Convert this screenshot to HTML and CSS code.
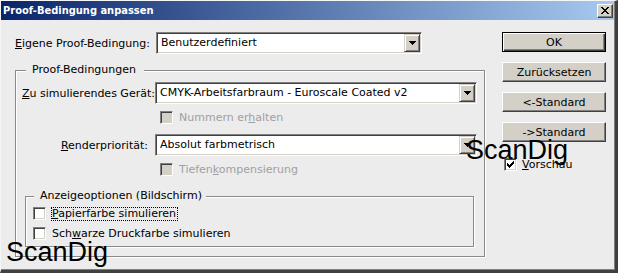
FILE: index.html
```html
<!DOCTYPE html>
<html lang="de">
<head>
<meta charset="utf-8">
<title>Proof-Bedingung anpassen</title>
<link rel="stylesheet" href="styles.css">
</head>
<body>
<div class="window">
  <div class="titlebar">
    <span class="title">Proof-Bedingung anpassen</span>
    <span class="close"><svg width="8" height="7" viewBox="0 0 8 7"><path d="M0 0h2v1H0z M6 0h2v1H6z M1 1h2v1H1z M5 1h2v1H5z M2 2h4v1H2z M3 3h2v1H3z M2 4h4v1H2z M1 5h2v1H1z M5 5h2v1H5z M0 6h2v1H0z M6 6h2v1H6z" fill="#000"/></svg></span>
  </div>
  <div class="content">
    <div class="main">
      <div class="row-top">
        <span class="lbl"><u>E</u>igene Proof-Bedingung:</span>
        <div class="select"><span class="val">Benutzerdefiniert</span><span class="drop"><svg width="7" height="4" viewBox="0 0 7 4"><path d="M0 0h7v1H0z M1 1h5v1H1z M2 2h3v1H2z M3 3h1v1H3z" fill="#000"/></svg></span></div>
      </div>
      <div class="group outer">
        <span class="legend legend-outer">Proof-Bedingungen</span>
        <div class="grid">
          <span class="lbl right"><u>Z</u>u simulierendes Gerät:</span>
          <div class="select"><span class="val">CMYK-Arbeitsfarbraum - Euroscale Coated v2</span><span class="drop"><svg width="7" height="4" viewBox="0 0 7 4"><path d="M0 0h7v1H0z M1 1h5v1H1z M2 2h3v1H2z M3 3h1v1H3z" fill="#000"/></svg></span></div>
          <span></span>
          <div class="check disabled gap-a"><span class="box"></span><span class="ctext">Nummern er<u>h</u>alten</span></div>
          <span class="lbl right gap-b"><u>R</u>enderpriorität:</span>
          <div class="select gap-b"><span class="val">Absolut farbmetrisch</span><span class="drop"><svg width="7" height="4" viewBox="0 0 7 4"><path d="M0 0h7v1H0z M1 1h5v1H1z M2 2h3v1H2z M3 3h1v1H3z" fill="#000"/></svg></span></div>
          <span></span>
          <div class="check disabled gap-a"><span class="box"></span><span class="ctext">Tiefen<u>k</u>ompensierung</span></div>
        </div>
        <div class="group inner">
          <span class="legend legend-inner">Anzeigeoptionen (Bildschirm)</span>
          <div class="check"><span class="box"></span><span class="ctext focus"><u>P</u>apierfarbe simulieren</span></div>
          <div class="check gap-a"><span class="box"></span><span class="ctext nofocus">Sch<u>w</u>arze Druckfarbe simulieren</span></div>
        </div>
      </div>
    </div>
    <div class="side">
      <span class="btn default">OK</span>
      <span class="btn">Zurücksetzen</span>
      <span class="btn">&lt;-Standard</span>
      <span class="btn">-&gt;Standard</span>
      <div class="check preview"><span class="box"><svg width="9" height="9" viewBox="0 0 9 9"><path d="M1 2h1v3H1z M2 3h1v3H2z M3 4h1v3H3z M4 3h1v3H4z M5 2h1v3H5z M6 1h1v3H6z M7 0h1v3H7z" fill="#000"/></svg></span><span class="ctext"><u>V</u>orschau</span></div>
    </div>
  </div>
  <span class="wm wm-bottom">ScanDig</span>
  <span class="wm wm-right">ScanDig</span>
</div>
</body>
</html>
```
FILE: styles.css
```css
* { box-sizing: border-box; }
html, body { margin: 0; padding: 0; }
body {
  width: 618px;
  height: 273px;
  background: #ECECEC;
  font-family: "DejaVu Sans", "Liberation Sans", sans-serif;
  font-size: 11px;
  color: #000;
}
u { text-decoration: underline; text-underline-offset: 1px; }

.window {
  position: relative;
  width: 618px;
  height: 273px;
  background: #ECECEC;
  border-style: solid;
  border-width: 1px 3px 3px 1px;
  border-color: #F6F6F6 #404040 #404040 #F6F6F6;
  overflow: hidden;
}
.window::after {
  content: "";
  position: absolute;
  right: 0; bottom: 0; left: 0; top: 0;
  box-shadow: inset -1px -1px #808080;
  pointer-events: none;
}

.titlebar {
  height: 19px;
  background: linear-gradient(to right, #0A246A, #A6CAF0);
  display: flex;
  align-items: center;
  justify-content: space-between;
  padding: 0 2px 0 2px;
}
.title {
  color: #fff;
  font-family: "DejaVu Sans Condensed", "DejaVu Sans", sans-serif;
  font-stretch: condensed;
  font-weight: bold;
  font-size: 11px;
}
.close {
  width: 16px;
  height: 14px;
  background: #D4D0C8;
  border: 1px solid;
  border-color: #fff #404040 #404040 #fff;
  box-shadow: inset -1px -1px #808080;
  display: flex;
  align-items: center;
  justify-content: center;
  padding-bottom: 1px;
}
.close svg { display: block; }

.content {
  display: flex;
  padding: 12px 0 0 14px;
}
.main { width: 470px; }
.side {
  width: 104px;
  margin-left: 17px;
  display: flex;
  flex-direction: column;
}

.row-top {
  display: grid;
  grid-template-columns: 141px 266px;
  align-items: center;
  height: 22px;
}

.lbl { white-space: nowrap; }
.lbl.right { text-align: right; padding-right: 7px; }

.select {
  height: 22px;
  background: #fff;
  border: 1px solid;
  border-color: #808080 #fff #fff #808080;
  box-shadow: inset 1px 1px #404040, inset -1px -1px #D4D0C8;
  display: flex;
  align-items: center;
  justify-content: space-between;
  padding: 1px 1px 1px 4px;
  white-space: nowrap;
}
.select .val { padding-bottom: 1px; }
.drop {
  width: 16px;
  height: 18px;
  background: #D4D0C8;
  border: 1px solid;
  border-color: #D4D0C8 #404040 #404040 #D4D0C8;
  box-shadow: inset 1px 1px #fff, inset -1px -1px #808080;
  display: flex;
  align-items: center;
  justify-content: center;
}
.drop svg { display: block; }

.group {
  position: relative;
  border: 1px solid #8A8A8A;
  box-shadow: inset 1px 1px #fff, 1px 1px #fff;
}
.group.outer {
  margin-top: 16px;
  padding: 11px 0 9px 0;
}
.group.inner {
  margin: 20px 10px 0 9px;
  padding: 10px 0 6px 7px;
}
.legend {
  position: absolute;
  top: -8px;
  line-height: 14px;
  background: #ECECEC;
  padding: 0 4px 0 6px;
  white-space: nowrap;
}
.legend-outer { left: 10px; padding-right: 8px; }
.legend-inner { left: 8px; }

.grid {
  display: grid;
  grid-template-columns: 133px 322px;
  align-items: center;
  padding-left: 6px;
}
.gap-a { margin-top: 7px; }
.gap-b { margin-top: 10px; }

.check {
  display: flex;
  align-items: center;
  height: 13px;
  white-space: nowrap;
}
.grid .check { margin-left: 5px; }
.box {
  width: 13px;
  height: 13px;
  flex: none;
  background: #fff;
  border: 1px solid;
  border-color: #808080 #fff #fff #808080;
  box-shadow: inset 1px 1px #404040, inset -1px -1px #D4D0C8;
  padding: 1px;
}
.box svg { display: block; margin: 1px 0 0 0; }
.check .ctext { margin-left: 6px; }
.check.disabled .box { background: #D4D0C8; }
.check.disabled .ctext { color: #A0A0A0; }
.ctext.focus, .ctext.nofocus {
  margin-left: 5px;
  border: 1px dotted #000;
  line-height: 12px;
  padding: 0 1px 0 0;
}
.ctext.nofocus { border-color: transparent; }

.btn {
  height: 20px;
  display: flex;
  align-items: center;
  justify-content: center;
  background: #D4D0C8;
  border: 1px solid;
  border-color: #fff #404040 #404040 #fff;
  box-shadow: inset -1px -1px #808080;
  margin-bottom: 10px;
  white-space: nowrap;
}
.btn.default {
  border-color: #000;
  box-shadow: inset 1px 1px #fff, inset -1px -1px #404040, inset -2px -2px #808080;
}
.check.preview {
  margin-top: 6px;
  margin-left: 2px;
}
.check.preview .ctext { margin-left: 5px; }

.wm {
  position: absolute;
  font-family: "Liberation Sans", Arial, sans-serif;
  font-size: 27px;
  line-height: 27px;
  color: #000;
  white-space: nowrap;
}
.wm-bottom { left: 5px; top: 238px; }
.wm-right { left: 465px; top: 136px; }
```
